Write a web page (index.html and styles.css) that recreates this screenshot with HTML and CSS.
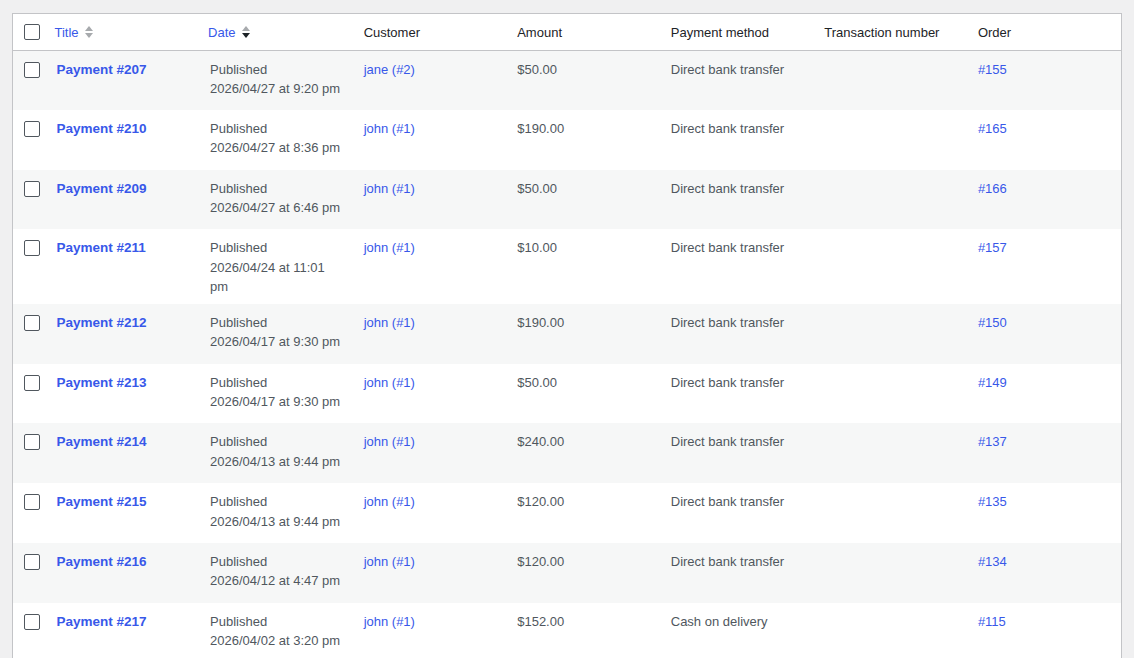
FILE: index.html
```html
<!DOCTYPE html>
<html lang="en">

<head>
    <meta charset="UTF-8">
    <meta name="viewport" content="width=device-width, initial-scale=1.0">
    <title>Payments</title>

    <link rel="stylesheet" href="styles.css">
</head>

<body>
    <table class="list-table">
        <thead>
            <tr>
                <td class="check-column"><input type="checkbox" class="check" aria-label="Select all"></td>
                <th class="sortable"><a href="#">
                        <span>Title</span>
                        <svg class="sort-icon" width="10" height="16" viewBox="0 0 10 16">
                            <polygon points="1,7 5,2 9,7" fill="#a7aaad" />
                            <polygon points="1,9 5,14 9,9" fill="#a7aaad" />
                        </svg>
                    </a></th>
                <th class="sortable"><a href="#">
                        <span>Date</span>
                        <svg class="sort-icon" width="10" height="16" viewBox="0 0 10 16">
                            <polygon points="1,7 5,2 9,7" fill="#a7aaad" />
                            <polygon points="1,9 5,14 9,9" fill="#1d2327" />
                        </svg>
                    </a></th>
                <th>Customer</th>
                <th>Amount</th>
                <th>Payment method</th>
                <th>Transaction number</th>
                <th>Order</th>
            </tr>
        </thead>
        <tbody>
            <tr>
                <th class="check-column"><input type="checkbox" class="check"></th>
                <td><strong><a class="row-title" href="#">Payment #207</a></strong></td>
                <td>Published<br>2026/04/27 at 9:20 pm</td>
                <td><a href="#">jane (#2)</a></td>
                <td>$50.00</td>
                <td>Direct bank transfer</td>
                <td></td>
                <td><a href="#">#155</a></td>
            </tr>
            <tr>
                <th class="check-column"><input type="checkbox" class="check"></th>
                <td><strong><a class="row-title" href="#">Payment #210</a></strong></td>
                <td>Published<br>2026/04/27 at 8:36 pm</td>
                <td><a href="#">john (#1)</a></td>
                <td>$190.00</td>
                <td>Direct bank transfer</td>
                <td></td>
                <td><a href="#">#165</a></td>
            </tr>
            <tr>
                <th class="check-column"><input type="checkbox" class="check"></th>
                <td><strong><a class="row-title" href="#">Payment #209</a></strong></td>
                <td>Published<br>2026/04/27 at 6:46 pm</td>
                <td><a href="#">john (#1)</a></td>
                <td>$50.00</td>
                <td>Direct bank transfer</td>
                <td></td>
                <td><a href="#">#166</a></td>
            </tr>
            <tr>
                <th class="check-column"><input type="checkbox" class="check"></th>
                <td><strong><a class="row-title" href="#">Payment #211</a></strong></td>
                <td>Published<br>2026/04/24 at 11:01 pm</td>
                <td><a href="#">john (#1)</a></td>
                <td>$10.00</td>
                <td>Direct bank transfer</td>
                <td></td>
                <td><a href="#">#157</a></td>
            </tr>
            <tr>
                <th class="check-column"><input type="checkbox" class="check"></th>
                <td><strong><a class="row-title" href="#">Payment #212</a></strong></td>
                <td>Published<br>2026/04/17 at 9:30 pm</td>
                <td><a href="#">john (#1)</a></td>
                <td>$190.00</td>
                <td>Direct bank transfer</td>
                <td></td>
                <td><a href="#">#150</a></td>
            </tr>
            <tr>
                <th class="check-column"><input type="checkbox" class="check"></th>
                <td><strong><a class="row-title" href="#">Payment #213</a></strong></td>
                <td>Published<br>2026/04/17 at 9:30 pm</td>
                <td><a href="#">john (#1)</a></td>
                <td>$50.00</td>
                <td>Direct bank transfer</td>
                <td></td>
                <td><a href="#">#149</a></td>
            </tr>
            <tr>
                <th class="check-column"><input type="checkbox" class="check"></th>
                <td><strong><a class="row-title" href="#">Payment #214</a></strong></td>
                <td>Published<br>2026/04/13 at 9:44 pm</td>
                <td><a href="#">john (#1)</a></td>
                <td>$240.00</td>
                <td>Direct bank transfer</td>
                <td></td>
                <td><a href="#">#137</a></td>
            </tr>
            <tr>
                <th class="check-column"><input type="checkbox" class="check"></th>
                <td><strong><a class="row-title" href="#">Payment #215</a></strong></td>
                <td>Published<br>2026/04/13 at 9:44 pm</td>
                <td><a href="#">john (#1)</a></td>
                <td>$120.00</td>
                <td>Direct bank transfer</td>
                <td></td>
                <td><a href="#">#135</a></td>
            </tr>
            <tr>
                <th class="check-column"><input type="checkbox" class="check"></th>
                <td><strong><a class="row-title" href="#">Payment #216</a></strong></td>
                <td>Published<br>2026/04/12 at 4:47 pm</td>
                <td><a href="#">john (#1)</a></td>
                <td>$120.00</td>
                <td>Direct bank transfer</td>
                <td></td>
                <td><a href="#">#134</a></td>
            </tr>
            <tr>
                <th class="check-column"><input type="checkbox" class="check"></th>
                <td><strong><a class="row-title" href="#">Payment #217</a></strong></td>
                <td>Published<br>2026/04/02 at 3:20 pm</td>
                <td><a href="#">john (#1)</a></td>
                <td>$152.00</td>
                <td>Cash on delivery</td>
                <td></td>
                <td><a href="#">#115</a></td>
            </tr>
        </tbody>
    </table>
</body>

</html>
```

FILE: styles.css
```css
body {
    background-color: #f0f0f1;
    margin: 0;
    padding: 13px 12px;
    font-family: "Liberation Sans", Arial, sans-serif;
    font-size: 13px;
    line-height: 1.5;
    color: #50575e;
}

a {
    color: #3858e9;
    text-decoration: none;
}

.list-table {
    width: 100%;
    table-layout: fixed;
    border-collapse: collapse;
    border: 1px solid #c3c4c7;
    background-color: white;
}

.list-table thead th,
.list-table thead td {
    text-align: left;
    font-weight: 400;
    color: #1d2327;
    padding: 9px 10px 7px;
    border-bottom: 1px solid #c3c4c7;
    vertical-align: middle;
}

.list-table thead th.sortable {
    padding: 0;
}

.sortable a {
    display: flex;
    align-items: center;
    gap: 5px;
    padding: 9px 8px 7px;
}

.sort-icon {
    display: block;
    margin-top: -2px;
}

.list-table tbody tr {
    height: 59.75px;
}

.list-table tbody tr:nth-child(odd) {
    background-color: #f6f7f7;
}

.list-table tbody td {
    padding: 9px 10px 7px;
    vertical-align: top;
}

.check-column {
    width: 34px;
    box-sizing: border-box;
}

.list-table .check-column {
    padding: 0 0 0 11px;
}

.list-table tbody .check-column {
    vertical-align: top;
    padding-top: 11px;
}

.check {
    appearance: none;
    display: block;
    width: 16px;
    height: 16px;
    margin: 0;
    border: 1px solid #50575e;
    border-radius: 2px;
    background-color: white;
    box-sizing: border-box;
}

.row-title {
    font-size: 13.5px;
    font-weight: 700;
}
```
